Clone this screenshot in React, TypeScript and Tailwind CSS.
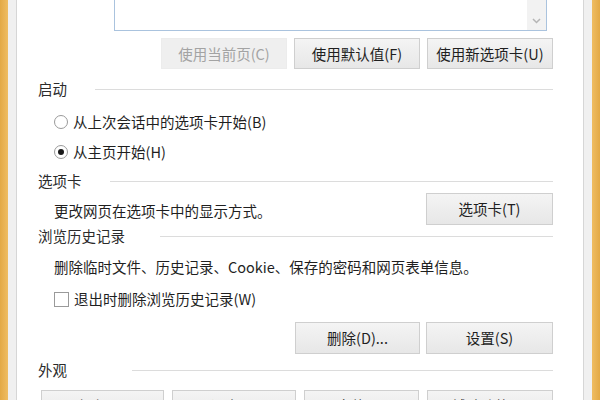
import React from "react";

const btn =
    "h-full flex items-center justify-center border border-[#cfcfcf] bg-gradient-to-b from-[#f4f4f4] to-[#e7e7e7] text-[14.5px] text-[#1f1f1f]";

const Button = ({ label, w, disabled }: { label: string; w: string; disabled?: boolean }) => (
    <div
        className={
            disabled
                ? `${w} shrink-0 h-full flex items-center justify-center border border-[#ececec] bg-[#efefef] text-[14.5px] text-[#a3a3a3]`
                : `${w} shrink-0 ${btn}`
        }
    >
        {label}
    </div>
);

const Header = ({ title, w }: { title: string; w: string }) => (
    <div className="flex items-center h-[20px] shrink-0">
        <div className={`${w} shrink-0 text-[14.5px] text-[#2b2b2b]`}>{title}</div>
        <div className="flex-1 h-px bg-[#dcdcdc]"></div>
    </div>
);

const Radio = ({ checked }: { checked?: boolean }) => (
    <div className="w-[14px] h-[14px] shrink-0 rounded-full border border-[#9a9a9a] bg-white flex items-center justify-center">
        {checked && <div className="w-[6px] h-[6px] rounded-full bg-[#1a1a1a]"></div>}
    </div>
);

const App = () => {
    return (
        <div className="w-[600px] h-[400px] flex overflow-hidden bg-white font-['Noto_Sans_CJK_SC',sans-serif] text-[#1f1f1f]">
            {/* left frame */}
            <div className="w-[8px] shrink-0 bg-gradient-to-r from-[#e3a945] to-[#efbd62]"></div>
            <div className="w-[9px] shrink-0 bg-[#f0f0f0] border-r border-[#d6d6d6]"></div>

            {/* content */}
            <div className="flex-1 flex flex-col pl-[21px] pr-[30px]">
                {/* textarea */}
                <div className="ml-[76px] w-[433px] h-[32px] mt-[-1px] shrink-0 border border-[#aac3de] bg-white flex justify-end">
                    <div className="w-[19px] h-full bg-[#f2f2f2] flex items-end justify-center pb-[6px]">
                        <svg width="9" height="6" viewBox="0 0 9 6">
                            <path d="M1 1l3.5 3.5L8 1" fill="none" stroke="#b5b5b5" strokeWidth="1.5" />
                        </svg>
                    </div>
                </div>

                <div className="mt-[7px] h-[31px] shrink-0 flex justify-end gap-[7px]">
                    <Button label="使用当前页(C)" w="w-[126px]" disabled />
                    <Button label="使用默认值(F)" w="w-[126px]" />
                    <Button label="使用新选项卡(U)" w="w-[126px]" />
                </div>

                {/* 启动 */}
                <div className="mt-[10px] shrink-0">
                    <Header title="启动" w="w-[57px]" />
                </div>
                <div className="mt-[8px] h-[30px] shrink-0 flex items-center gap-[5px] ml-[16px] text-[14.5px]">
                    <Radio />
                    <span>从上次会话中的选项卡开始(B)</span>
                </div>
                <div className="h-[30px] shrink-0 flex items-center gap-[5px] ml-[16px] text-[14.5px]">
                    <Radio checked />
                    <span>从主页开始(H)</span>
                </div>

                {/* 选项卡 */}
                <div className="mt-[4px] shrink-0">
                    <Header title="选项卡" w="w-[72px]" />
                </div>
                <div className="mt-[2px] h-[32px] shrink-0 flex items-center justify-between">
                    <span className="ml-[16px] mt-[4px] text-[14.5px]">更改网页在选项卡中的显示方式。</span>
                    <Button label="选项卡(T)" w="w-[127px]" />
                </div>

                {/* 浏览历史记录 */}
                <div className="mt-[1px] shrink-0">
                    <Header title="浏览历史记录" w="w-[122px]" />
                </div>
                <div className="mt-[11px] h-[20px] shrink-0 flex items-center ml-[16px] text-[14.5px]">
                    删除临时文件、历史记录、Cookie、保存的密码和网页表单信息。
                </div>
                <div className="mt-[12px] h-[20px] shrink-0 flex items-center gap-[5px] ml-[16px] text-[14.5px]">
                    <div className="w-[15px] h-[15px] shrink-0 border border-[#9a9a9a] bg-white"></div>
                    <span>退出时删除浏览历史记录(W)</span>
                </div>
                <div className="mt-[13px] h-[32px] shrink-0 flex justify-end gap-[6px]">
                    <Button label="删除(D)..." w="w-[125px]" />
                    <Button label="设置(S)" w="w-[127px]" />
                </div>

                {/* 外观 */}
                <div className="mt-[6px] shrink-0">
                    <Header title="外观" w="w-[94px]" />
                </div>
                <div className="mt-[10px] h-[32px] shrink-0 flex gap-[8px] ml-[3px]">
                    <Button label="颜色(O)" w="w-[123px]" />
                    <Button label="语言(L)" w="w-[124px]" />
                    <Button label="字体(N)" w="w-[115px]" />
                    <Button label="辅助功能(E)" w="w-[126px]" />
                </div>
            </div>

            {/* right frame */}
            <div className="w-[9px] shrink-0 bg-[#f0f0f0] border-l border-[#d6d6d6]"></div>
            <div className="w-[8px] shrink-0 bg-gradient-to-r from-[#efbd62] to-[#e3a945]"></div>
        </div>
    );
};

export default App;
